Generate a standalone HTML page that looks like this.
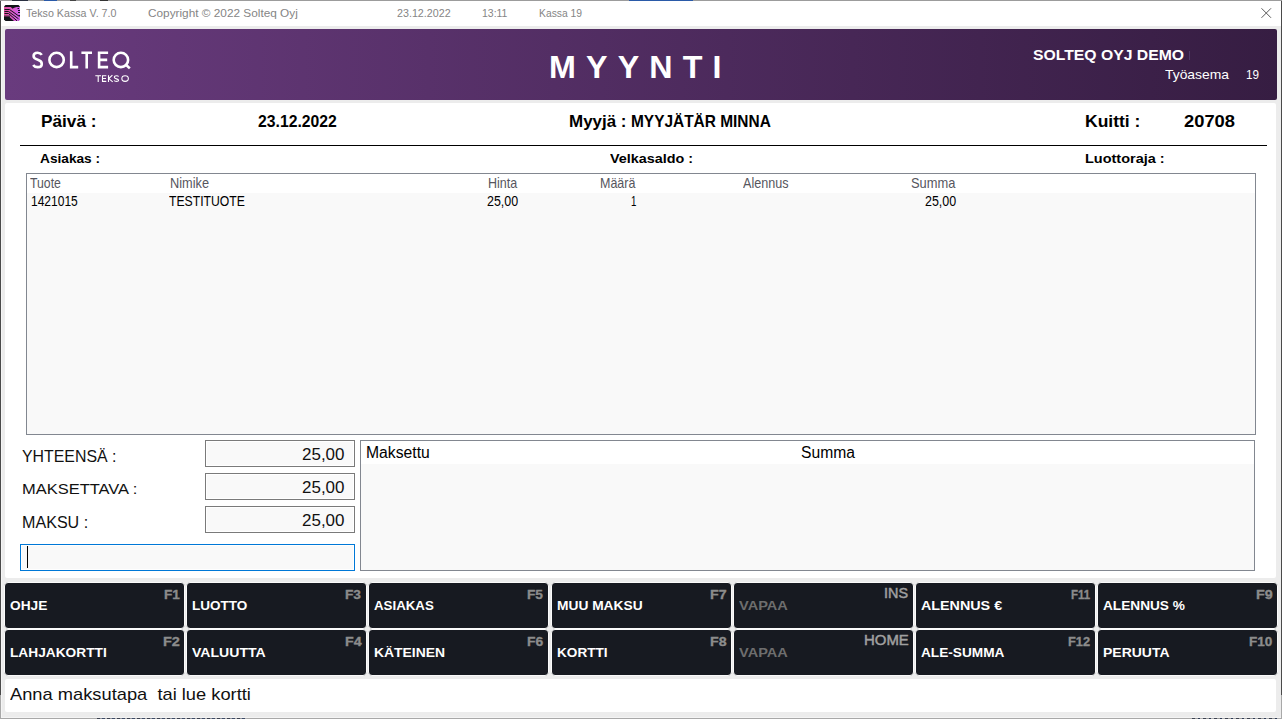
<!DOCTYPE html>
<html><head><meta charset="utf-8"><style>
html,body{margin:0;padding:0;}
body{width:1282px;height:719px;position:relative;overflow:hidden;background:#ececec;font-family:"Liberation Sans",sans-serif;}
.a{position:absolute;}
.t{position:absolute;white-space:pre;transform-origin:0 0;}
.btn{position:absolute;background:#171a21;border:1px solid #fafafa;border-radius:4px;}
</style></head><body>
<div class="a" style="left:0;top:0;width:1282px;height:1px;background:#9c9c9c"></div>
<div class="a" style="left:629px;top:0;width:64px;height:1px;background:#2a5aa8"></div>
<div class="a" style="left:1px;top:1px;width:1280px;height:25px;background:#fff"></div>
<div class="a" style="left:0;top:1px;width:1px;height:694px;background:#4a4a4a"></div>
<div class="a" style="left:0;top:695px;width:1px;height:24px;background:#a8a8a8"></div>
<div class="a" style="left:1281px;top:1px;width:1px;height:694px;background:#4a4a4a"></div>
<div class="a" style="left:1281px;top:695px;width:1px;height:24px;background:#a8a8a8"></div>
<div class="a" style="left:1px;top:26px;width:1px;height:691px;background:#f5f5f5"></div>
<div class="a" style="left:0;top:718px;width:1282px;height:1px;background:#a8a8a8"></div>
<div class="a" style="left:1px;top:717px;width:1280px;height:1px;background:#f4f4f4"></div>
<div class="a" style="left:97px;top:718px;width:150px;height:1px;background:repeating-linear-gradient(90deg,#3c4250 0 3px,#8a8f98 3px 5px,#3c4a66 5px 8px,#b0b0b0 8px 10px)"></div>
<div class="a" style="left:1192px;top:718px;width:88px;height:1px;background:repeating-linear-gradient(90deg,#3c4250 0 3px,#9a9a9a 3px 6px,#2c3a56 6px 8px,#b0b0b0 8px 11px)"></div>
<div class="a" style="left:12px;top:0;width:16px;height:1px;background:#2a3040"></div>
<div class="a" style="left:44px;top:0;width:13px;height:1px;background:#2a5aa8"></div>
<div class="a" style="left:70px;top:0;width:6px;height:1px;background:#444"></div>
<div class="a" style="left:100px;top:0;width:8px;height:1px;background:#333"></div>
<svg class="a" style="left:4px;top:5px" width="16" height="16" viewBox="0 0 16 16">
<defs><linearGradient id="pg" x1="0" x2="1" y1="0" y2="0"><stop offset="0" stop-color="#e2519c"/><stop offset="0.5" stop-color="#dc58c8"/><stop offset="1" stop-color="#cf60ea"/></linearGradient>
<linearGradient id="fd" x1="0" x2="0" y1="0" y2="1"><stop offset="0.75" stop-color="#111318" stop-opacity="0"/><stop offset="1" stop-color="#111318" stop-opacity="0.85"/></linearGradient></defs>
<path d="M1.5,0 H14.5 L16,1.5 V14.5 L14.5,16 H1.5 L0,14.5 V1.5 Z" fill="#111318"/>
<path d="M0,2 H6.8 L8.5,3.8 L10.2,2.8 L12.5,2 H16 V14.5 L14.5,16 H10 L5.5,12 H0 Z" fill="url(#pg)"/>
<rect x="0" y="2" width="6" height="10" fill="url(#fd)"/>
<g stroke="#111318" stroke-width="1" fill="none">
<path d="M0.5,4.5 H5.5 L15.5,11.5"/>
<path d="M0.5,6.5 H4.5 L14.5,13.8"/>
<path d="M0.5,8.5 H4.5 L13,15.8"/>
<path d="M13.5,3.5 H15 M14,5.5 H16 M14,7.5 H16 M14.5,10.5 H16"/>
</g>
</svg>
<svg class="a" style="left:1260px;top:7px" width="12" height="12" viewBox="0 0 12 12"><path d="M1.5,1.3 L11,10.8 M11,1.3 L1.5,10.8" stroke="#5a5a5a" stroke-width="1"/></svg>
<div class="a" style="left:5px;top:29px;width:1272px;height:71px;border-radius:2px;background:linear-gradient(90deg,#693b7e,#361d42)"></div>
<svg class="a" style="left:0;top:0" width="140" height="100" viewBox="0 0 140 100" fill="none" stroke="#fff">
<g stroke-width="2.6" stroke-linejoin="miter">
<path d="M41.8,54.9 C40.8,53.4 39.4,52.7 37.6,52.7 C35.2,52.7 33.6,54 33.6,56 C33.6,58.2 35.6,59.1 37.8,59.7 C40.2,60.4 41.8,61.4 41.8,63.9 C41.8,66 40.1,67.1 37.6,67.1 C35.6,67.1 34.1,66.4 33.2,65"/>
<circle cx="56.6" cy="59.9" r="7.2"/>
<path d="M71.2,51.3 V67.1 H78.2"/>
<path d="M81.4,52.7 H92 M86.7,52.7 V68.4"/>
<path d="M108.1,52.7 H99.1 V67.1 H108.1 M99.1,59.9 H107.2"/>
<circle cx="120.9" cy="59.9" r="7.2"/>
<path d="M125.4,64.3 L129.8,68.4"/>
</g>
<g stroke-width="1.1">
<path d="M95.3,75.75 H101 M98.2,75.75 V81.9"/>
<path d="M106.3,75.75 H102.5 V81.35 H106.3 M102.5,78.55 H106"/>
<path d="M108.5,75.2 V81.9 M112.4,75.2 L108.8,78.6 L112.7,81.9"/>
<path d="M118.7,76.5 C118.2,75.95 117.4,75.75 116.5,75.75 C115.1,75.75 114.3,76.4 114.3,77.3 C114.3,78.3 115.3,78.55 116.5,78.85 C117.8,79.15 118.6,79.55 118.6,80.45 C118.6,81.35 117.6,81.35 116.4,81.35 C115.3,81.35 114.5,81.1 114,80.5"/>
<ellipse cx="125.1" cy="78.55" rx="3.25" ry="2.8"/>
</g>
</svg>
<div class="a" style="left:1189px;top:51px;width:1px;height:9px;background:#4e3a68"></div>
<div class="a" style="left:5px;top:103px;width:1271px;height:475px;border-radius:2px;background:#fff"></div>
<div class="a" style="left:20px;top:145px;width:1247px;height:1px;background:#000"></div>
<div class="a" style="left:26px;top:173px;width:1228px;height:260px;border:1px solid #828790;background:#f9f9f9"></div>
<div class="a" style="left:27px;top:174px;width:1228px;height:19px;background:#fff"></div>
<div class="a" style="left:205px;top:440px;width:148px;height:25px;border:1px solid #7a7a7a;background:#f9f9f9;box-shadow:inset 0 0 0 1px #fff"></div>
<div class="a" style="left:205px;top:473px;width:148px;height:25px;border:1px solid #7a7a7a;background:#f9f9f9;box-shadow:inset 0 0 0 1px #fff"></div>
<div class="a" style="left:205px;top:506px;width:148px;height:25px;border:1px solid #7a7a7a;background:#f9f9f9;box-shadow:inset 0 0 0 1px #fff"></div>
<div class="a" style="left:20px;top:544px;width:333px;height:25px;border:1px solid #0078d7;background:#f9f9f9;box-shadow:inset 0 0 0 1px #fff"></div>
<div class="a" style="left:27px;top:546px;width:1px;height:22px;background:#000"></div>
<div class="a" style="left:360px;top:440px;width:893px;height:129px;border:1px solid #828790;background:#f9f9f9"></div>
<div class="a" style="left:361px;top:441px;width:893px;height:23px;background:#fff"></div>
<div class="btn" style="left:4px;top:582px;width:179px;height:45px"></div><div class="btn" style="left:186px;top:582px;width:179px;height:45px"></div><div class="btn" style="left:368px;top:582px;width:179px;height:45px"></div><div class="btn" style="left:551px;top:582px;width:179px;height:45px"></div><div class="btn" style="left:733px;top:582px;width:179px;height:45px"></div><div class="btn" style="left:915px;top:582px;width:179px;height:45px"></div><div class="btn" style="left:1097px;top:582px;width:179px;height:45px"></div><div class="btn" style="left:4px;top:629px;width:179px;height:45px"></div><div class="btn" style="left:186px;top:629px;width:179px;height:45px"></div><div class="btn" style="left:368px;top:629px;width:179px;height:45px"></div><div class="btn" style="left:551px;top:629px;width:179px;height:45px"></div><div class="btn" style="left:733px;top:629px;width:179px;height:45px"></div><div class="btn" style="left:915px;top:629px;width:179px;height:45px"></div><div class="btn" style="left:1097px;top:629px;width:179px;height:45px"></div>
<div class="a" style="left:5px;top:679px;width:1271px;height:33px;border-radius:2px;background:#fff"></div>
<div class="t" style="left:26.00px;top:7px;font-size:11.75px;line-height:11.75px;font-weight:400;color:#858585;transform:scaleX(0.9086);">Tekso Kassa V. 7.0</div>
<div class="t" style="left:147.50px;top:7px;font-size:11.75px;line-height:11.75px;font-weight:400;color:#858585;transform:scaleX(1.0048);">Copyright © 2022 Solteq Oyj</div>
<div class="t" style="left:397.20px;top:7px;font-size:11.75px;line-height:11.75px;font-weight:400;color:#858585;transform:scaleX(0.9114);">23.12.2022</div>
<div class="t" style="left:481.50px;top:7px;font-size:11.75px;line-height:11.75px;font-weight:400;color:#858585;transform:scaleX(0.8903);">13:11</div>
<div class="t" style="left:538.70px;top:7px;font-size:11.75px;line-height:11.75px;font-weight:400;color:#858585;transform:scaleX(0.8798);">Kassa 19</div>
<div class="t" style="left:549.00px;top:51px;font-size:32.25px;line-height:32.25px;font-weight:700;color:#fff;letter-spacing:10.15px;">MYYNTI</div>
<div class="t" style="left:1033.00px;top:47px;font-size:15.5px;line-height:15.5px;font-weight:700;color:#fff;transform:scaleX(1.0154);">SOLTEQ OYJ DEMO</div>
<div class="t" style="left:1165.00px;top:68px;font-size:13.0px;line-height:13.0px;font-weight:400;color:#fff;transform:scaleX(1.0670);">Työasema</div>
<div class="t" style="left:1246.00px;top:68px;font-size:13.0px;line-height:13.0px;font-weight:400;color:#fff;transform:scaleX(0.8993);">19</div>
<div class="t" style="left:40.80px;top:113px;font-size:17.25px;line-height:17.25px;font-weight:700;color:#000;transform:scaleX(0.9980);">Päivä :</div>
<div class="t" style="left:258.20px;top:113px;font-size:17.0px;line-height:17.0px;font-weight:700;color:#000;transform:scaleX(0.9261);">23.12.2022</div>
<div class="t" style="left:569.40px;top:113px;font-size:16.5px;line-height:16.5px;font-weight:700;color:#000;transform:scaleX(1.0280);">Myyjä :</div>
<div class="t" style="left:631.20px;top:113px;font-size:16.5px;line-height:16.5px;font-weight:700;color:#000;transform:scaleX(0.9356);">MYYJÄTÄR MINNA</div>
<div class="t" style="left:1084.80px;top:113px;font-size:17.0px;line-height:17.0px;font-weight:700;color:#000;transform:scaleX(1.0293);">Kuitti :</div>
<div class="t" style="left:1183.90px;top:113px;font-size:17.25px;line-height:17.25px;font-weight:700;color:#000;transform:scaleX(1.0631);">20708</div>
<div class="t" style="left:40.10px;top:152px;font-size:13.0px;line-height:13.0px;font-weight:700;color:#000;transform:scaleX(1.0526);">Asiakas :</div>
<div class="t" style="left:610.10px;top:152px;font-size:13.5px;line-height:13.5px;font-weight:700;color:#000;transform:scaleX(1.0648);">Velkasaldo :</div>
<div class="t" style="left:1084.80px;top:153px;font-size:12.5px;line-height:12.5px;font-weight:700;color:#000;transform:scaleX(1.1578);">Luottoraja :</div>
<div class="t" style="left:29.80px;top:176px;font-size:14.5px;line-height:14.5px;font-weight:400;color:#56565e;transform:scaleX(0.8456);">Tuote</div>
<div class="t" style="left:170.40px;top:176px;font-size:14.5px;line-height:14.5px;font-weight:400;color:#56565e;transform:scaleX(0.8801);">Nimike</div>
<div class="t" style="left:487.60px;top:176px;font-size:14.5px;line-height:14.5px;font-weight:400;color:#56565e;transform:scaleX(0.8624);">Hinta</div>
<div class="t" style="left:599.50px;top:176px;font-size:14.5px;line-height:14.5px;font-weight:400;color:#56565e;transform:scaleX(0.8612);">Määrä</div>
<div class="t" style="left:742.50px;top:176px;font-size:14.5px;line-height:14.5px;font-weight:400;color:#56565e;transform:scaleX(0.8702);">Alennus</div>
<div class="t" style="left:910.60px;top:176px;font-size:14.5px;line-height:14.5px;font-weight:400;color:#56565e;transform:scaleX(0.8886);">Summa</div>
<div class="t" style="left:31.40px;top:194px;font-size:14.75px;line-height:14.75px;font-weight:400;color:#000;transform:scaleX(0.8150);">1421015</div>
<div class="t" style="left:168.70px;top:194px;font-size:14.75px;line-height:14.75px;font-weight:400;color:#000;transform:scaleX(0.8270);">TESTITUOTE</div>
<div class="t" style="left:487.20px;top:194px;font-size:14.75px;line-height:14.75px;font-weight:400;color:#000;transform:scaleX(0.8454);">25,00</div>
<div class="t" style="left:630.70px;top:194px;font-size:14.75px;line-height:14.75px;font-weight:400;color:#000;transform:scaleX(0.6585);">1</div>
<div class="t" style="left:925.00px;top:194px;font-size:14.75px;line-height:14.75px;font-weight:400;color:#000;transform:scaleX(0.8454);">25,00</div>
<div class="t" style="left:21.70px;top:448px;font-size:16.5px;line-height:16.5px;font-weight:400;color:#111;transform:scaleX(0.9622);">YHTEENSÄ :</div>
<div class="t" style="left:21.70px;top:481px;font-size:15.5px;line-height:15.5px;font-weight:400;color:#111;transform:scaleX(1.0624);">MAKSETTAVA :</div>
<div class="t" style="left:21.70px;top:514px;font-size:16.25px;line-height:16.25px;font-weight:400;color:#111;transform:scaleX(0.9907);">MAKSU :</div>
<div class="t" style="left:302.00px;top:446px;font-size:17.0px;line-height:17.0px;font-weight:400;color:#111;transform:scaleX(0.9992);">25,00</div>
<div class="t" style="left:302.00px;top:479px;font-size:17.0px;line-height:17.0px;font-weight:400;color:#111;transform:scaleX(0.9992);">25,00</div>
<div class="t" style="left:302.00px;top:512px;font-size:17.0px;line-height:17.0px;font-weight:400;color:#111;transform:scaleX(0.9992);">25,00</div>
<div class="t" style="left:365.60px;top:444px;font-size:17.25px;line-height:17.25px;font-weight:400;color:#000;transform:scaleX(0.9116);">Maksettu</div>
<div class="t" style="left:800.90px;top:444px;font-size:17.25px;line-height:17.25px;font-weight:400;color:#000;transform:scaleX(0.9084);">Summa</div>
<div class="t" style="left:10.20px;top:599px;font-size:13.25px;line-height:13.25px;font-weight:700;color:#fff;transform:scaleX(1.0366);">OHJE</div>
<div class="t" style="left:163.50px;top:588px;font-size:13.5px;line-height:13.5px;font-weight:700;color:#8c8c8c;transform:scaleX(1.0092);-webkit-text-stroke:0.35px #8c8c8c;">F1</div>
<div class="t" style="left:192.20px;top:599px;font-size:13.25px;line-height:13.25px;font-weight:700;color:#fff;transform:scaleX(1.0218);">LUOTTO</div>
<div class="t" style="left:345.40px;top:588px;font-size:13.5px;line-height:13.5px;font-weight:700;color:#8c8c8c;transform:scaleX(1.0156);-webkit-text-stroke:0.35px #8c8c8c;">F3</div>
<div class="t" style="left:374.20px;top:599px;font-size:13.25px;line-height:13.25px;font-weight:700;color:#fff;transform:scaleX(1.0027);">ASIAKAS</div>
<div class="t" style="left:527.40px;top:588px;font-size:13.5px;line-height:13.5px;font-weight:700;color:#8c8c8c;transform:scaleX(1.0156);-webkit-text-stroke:0.35px #8c8c8c;">F5</div>
<div class="t" style="left:557.20px;top:599px;font-size:13.25px;line-height:13.25px;font-weight:700;color:#fff;transform:scaleX(1.0383);">MUU MAKSU</div>
<div class="t" style="left:709.80px;top:588px;font-size:13.5px;line-height:13.5px;font-weight:700;color:#8c8c8c;transform:scaleX(1.0537);-webkit-text-stroke:0.35px #8c8c8c;">F7</div>
<div class="t" style="left:739.20px;top:599px;font-size:13.25px;line-height:13.25px;font-weight:700;color:#6e6e6e;transform:scaleX(1.0988);">VAPAA</div>
<div class="t" style="left:884.40px;top:587px;font-size:13.75px;line-height:13.75px;font-weight:400;color:#a0a0a0;transform:scaleX(1.0471);-webkit-text-stroke:0.45px #a0a0a0;">INS</div>
<div class="t" style="left:921.20px;top:599px;font-size:13.25px;line-height:13.25px;font-weight:700;color:#fff;transform:scaleX(1.0799);">ALENNUS €</div>
<div class="t" style="left:1071.30px;top:588px;font-size:13.5px;line-height:13.5px;font-weight:700;color:#8c8c8c;transform:scaleX(0.8482);-webkit-text-stroke:0.35px #8c8c8c;">F11</div>
<div class="t" style="left:1103.20px;top:599px;font-size:13.25px;line-height:13.25px;font-weight:700;color:#fff;transform:scaleX(1.0300);">ALENNUS %</div>
<div class="t" style="left:1255.70px;top:588px;font-size:13.5px;line-height:13.5px;font-weight:700;color:#8c8c8c;transform:scaleX(1.0600);-webkit-text-stroke:0.35px #8c8c8c;">F9</div>
<div class="t" style="left:10.20px;top:646px;font-size:13.25px;line-height:13.25px;font-weight:700;color:#fff;transform:scaleX(1.0345);">LAHJAKORTTI</div>
<div class="t" style="left:162.50px;top:635px;font-size:13.5px;line-height:13.5px;font-weight:700;color:#8c8c8c;transform:scaleX(1.0727);-webkit-text-stroke:0.35px #8c8c8c;">F2</div>
<div class="t" style="left:192.20px;top:646px;font-size:13.25px;line-height:13.25px;font-weight:700;color:#fff;transform:scaleX(1.0615);">VALUUTTA</div>
<div class="t" style="left:344.80px;top:635px;font-size:13.5px;line-height:13.5px;font-weight:700;color:#8c8c8c;transform:scaleX(1.0537);-webkit-text-stroke:0.35px #8c8c8c;">F4</div>
<div class="t" style="left:374.20px;top:646px;font-size:13.25px;line-height:13.25px;font-weight:700;color:#fff;transform:scaleX(1.0499);">KÄTEINEN</div>
<div class="t" style="left:527.20px;top:635px;font-size:13.5px;line-height:13.5px;font-weight:700;color:#8c8c8c;transform:scaleX(1.0283);-webkit-text-stroke:0.35px #8c8c8c;">F6</div>
<div class="t" style="left:557.20px;top:646px;font-size:13.25px;line-height:13.25px;font-weight:700;color:#fff;transform:scaleX(1.0260);">KORTTI</div>
<div class="t" style="left:709.80px;top:635px;font-size:13.5px;line-height:13.5px;font-weight:700;color:#8c8c8c;transform:scaleX(1.0537);-webkit-text-stroke:0.35px #8c8c8c;">F8</div>
<div class="t" style="left:739.20px;top:646px;font-size:13.25px;line-height:13.25px;font-weight:700;color:#6e6e6e;transform:scaleX(1.0988);">VAPAA</div>
<div class="t" style="left:863.60px;top:634px;font-size:13.75px;line-height:13.75px;font-weight:400;color:#a0a0a0;transform:scaleX(1.0861);-webkit-text-stroke:0.45px #a0a0a0;">HOME</div>
<div class="t" style="left:921.20px;top:646px;font-size:13.25px;line-height:13.25px;font-weight:700;color:#fff;transform:scaleX(1.0302);">ALE-SUMMA</div>
<div class="t" style="left:1068.30px;top:635px;font-size:13.5px;line-height:13.5px;font-weight:700;color:#8c8c8c;transform:scaleX(0.9501);-webkit-text-stroke:0.35px #8c8c8c;">F12</div>
<div class="t" style="left:1103.20px;top:646px;font-size:13.25px;line-height:13.25px;font-weight:700;color:#fff;transform:scaleX(1.0546);">PERUUTA</div>
<div class="t" style="left:1249.10px;top:635px;font-size:13.5px;line-height:13.5px;font-weight:700;color:#8c8c8c;transform:scaleX(1.0017);-webkit-text-stroke:0.35px #8c8c8c;">F10</div>
<div class="t" style="left:9.50px;top:686px;font-size:17.0px;line-height:17.0px;font-weight:400;color:#111;transform:scaleX(1.0756);">Anna maksutapa  tai lue kortti</div>
</body></html>
